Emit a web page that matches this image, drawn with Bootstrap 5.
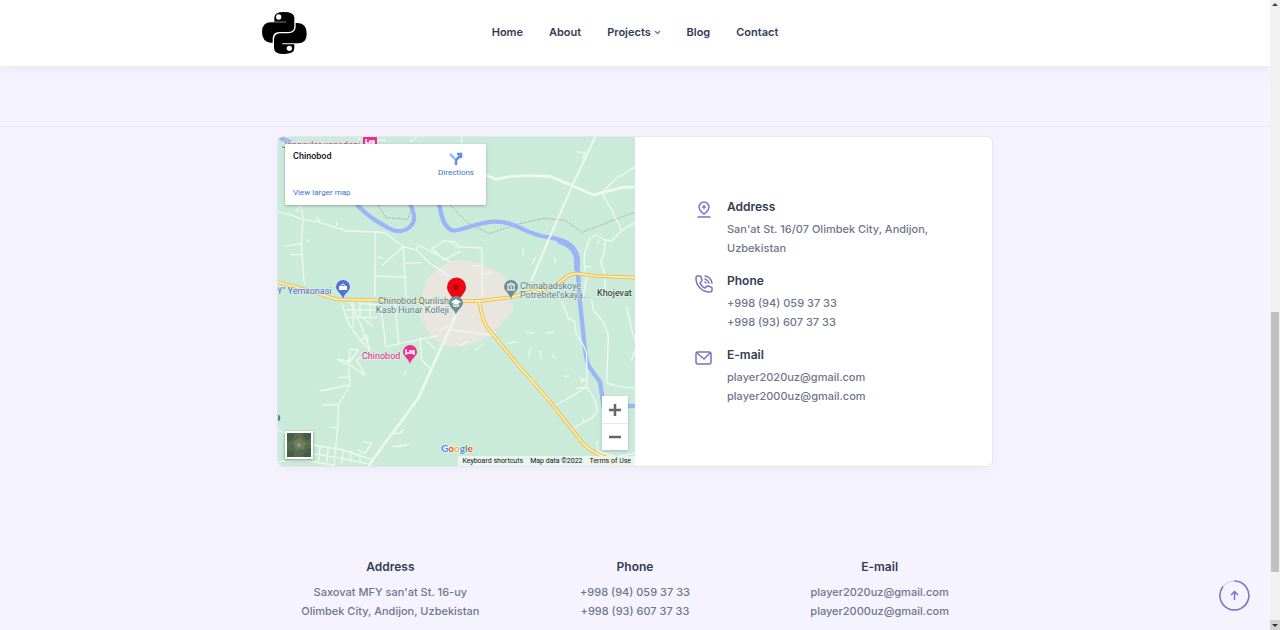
<!DOCTYPE html>
<html lang="en">
<head>
<meta charset="utf-8">
<meta name="viewport" content="width=device-width, initial-scale=1">
<title>Contact</title>
<link href="https://cdn.jsdelivr.net/npm/bootstrap@5.3.0/dist/css/bootstrap.min.css" rel="stylesheet">
<style>
  body { background: #f5f4fe; color: #6f758c; font: 500 11px/19px Inter, "Liberation Sans", sans-serif; }
  a { color: inherit; text-decoration: none; }
  h2, h3 { color: #333c54; font-size: 12px; line-height: 18px; font-weight: 600; }
  .site-header { background: #fff; height: 66px; box-shadow: 0 3px 16px rgba(60, 55, 110, .08); z-index: 2; }
  .page-width { max-width: 746px; }
  .main-menu { gap: 26px; padding-bottom: 2px; }
  .main-menu a { color: #333c54; font-weight: 600; }
  .intro-band { height: 61px; border-bottom: 1px solid #ecebf5; }
  .contact-area { padding: 9px 15px 0; }
  .contact-card { border: 1px solid #e6e5f0; border-radius: 6px; overflow: hidden; box-shadow: 0 3px 16px rgba(60, 55, 110, .05); }
  .map-pane { height: 329px; background: #cbebda; font-family: Roboto, sans-serif; }
  .map-info { top: 7px; left: 7px; width: 201px; height: 61px; padding: 5px 8px; border-radius: 1px; box-shadow: 0 1px 3px rgba(0, 0, 0, .3); font-size: 8px; line-height: 14px; color: #3b70dc; font-weight: 400; }
  .map-info strong { color: #111; font-size: 9px; font-weight: 500; }
  .directions { right: 12px; top: 8px; }
  .zoom-box { right: 7px; bottom: 16px; width: 26px; box-shadow: 0 1px 3px rgba(0, 0, 0, .2); }
  .zoom-box button { height: 27px; border: 0; background: #fff; color: #666; padding: 0; }
  .zoom-box button + button { box-shadow: inset 0 1px #e8e8e8; }
  .satellite { left: 7px; bottom: 7px; width: 28px; height: 28px; border: 2px solid #fff; padding: 0; box-shadow: 0 1px 3px rgba(0, 0, 0, .4); }
  .map-terms { right: 0; bottom: 0; gap: 7px; height: 10px; padding: 0 4px; background: rgba(245, 248, 246, .75); color: #111; font-size: 7px; line-height: 10px; font-weight: 400; }
  .map-label { font: 400 9px Roboto, sans-serif; paint-order: stroke; stroke: #e4f4eb; stroke-width: 1px; }
  .info-item { gap: 14px; }
  .info-item + .info-item { margin-top: 14px; }
  .info-item svg { flex: none; margin-top: 3px; stroke: #7f6fc6; fill: none; }
  .info-item h2 { margin-bottom: 4px; }
  .site-footer { margin-top: 91px; padding: 0 6px; }
  .site-footer h3 { margin-bottom: 7px; font-size: 12px; }
  .to-top { right: 30px; bottom: 19px; width: 31px; height: 31px; z-index: 3; }
  .scroll-strip { width: 10px; z-index: 4; background: #f1f1f1; }
  .scroll-thumb { height: 260px; width: 8px; background: #c1c1c1; margin-bottom: 48px; }
  .scroll-end { height: 10px; background: #d2d2d2; }
</style>
</head>
<body>
<div class="d-flex min-vh-100">
  <div class="flex-grow-1">
    <header class="site-header position-relative">
      <div class="page-width mx-auto h-100 d-flex align-items-center position-relative">
        <a href="#" aria-label="Python" class="d-block">
          <svg class="d-block" width="45" height="42" viewBox="0 0 135 126">
            <path d="M37 31V17Q37 0 66 0Q97 0 97 17V42Q97 60 78 60H51Q33 61 32 79V92H27Q0 90 0 60Q0 31 27 31H72V29H37Z"/>
            <path d="M101 33H107Q134 33 134 65Q134 94 108 94H61V97H97V109Q97 126 66 126Q36 126 36 108V82Q37 65 54 64H79Q101 62 101 44Z"/>
            <circle cx="50" cy="15" r="8" fill="#fff"/><circle cx="82" cy="109" r="8" fill="#fff"/>
          </svg>
        </a>
        <nav class="position-absolute start-0 end-0 pe-none" aria-label="Main">
          <ul class="main-menu list-unstyled d-flex justify-content-center m-0 pe-auto">
            <li><a href="#">Home</a></li>
            <li><a href="#">About</a></li>
            <li><a href="#">Projects <svg width="7" height="5" viewBox="0 0 7 5" fill="none" stroke="#7f6fc6" stroke-width="1.4"><path d="M1 1l2.500 2.500L6 1"/></svg></a></li>
            <li><a href="#">Blog</a></li>
            <li><a href="#">Contact</a></li>
          </ul>
        </nav>
      </div>
    </header>
    <div class="intro-band"></div>
    <main class="page-width contact-area mx-auto">
      <section class="contact-card row g-0 bg-white">
        <div class="map-pane col-6 position-relative overflow-hidden">
          <svg class="d-block w-100 h-100" viewBox="0 0 357 329" preserveAspectRatio="xMidYMid slice" role="img" aria-label="Map of Chinobod">
            <g transform="scale(.33333)" fill="none" stroke-linejoin="round" stroke-linecap="round">
              <path fill="#e9e5df" d="M426 539Q430 490 436 459Q445 420 476 399Q510 370 546 369Q585 368 616 384Q655 400 681 419L706 519Q680 560 646 579Q620 610 586 619Q560 632 516 629L496 624Q445 590 426 539Z"/>
              <g stroke="#7d8c89" stroke-width="2" stroke-linecap="butt" stroke-dasharray="5 4">
                <path d="M300 204L324 242L390 247L400 210M516 204L570 258L634 290L716 262L796 244L862 250L912 286L1071 225"/>
              </g>
              <g stroke="#9bb5f7" stroke-width="13">
                <path d="M238 204Q276 244 316 264Q350 286 370 282Q401 275 408 249Q410 229 396 200"/>
                <path d="M484 204C490 240 500 280 530 281C570 275 600 256 646 254C720 252 740 295 816 301C870 312 894 330 898 370L904 479L916 589Q922 660 931 684Q945 708 966 734L976 800M976 807H1071M0 0L34 14" />
                <path stroke-width="18" d="M846 312Q890 325 897 365V395"/>
              </g>
              <g stroke="#edf8f1" stroke-width="4">
                <g transform="translate(-24 -21)">
                  <path d="M22 245L60 254L95 268L150 277L230 303L320 306L345 308L400 350L440 360L480 400L540 440M93 225L99 268L94 340L103 462M45 349L94 340M65 374L98 374M315 308L315 500M400 350L408 500M400 350L375 372L338 405M408 400L455 398M440 360L445 345L540 395M485 355L500 348L520 332L555 335L570 350M485 355L522 390L570 365M320 438L410 442M267 20V44M420 35L440 22M290 22L310 32L345 30M80 245L88 225M138 265L150 272M200 285V278M110 330L117 335M325 380L335 385"/>
                </g>
                <g transform="translate(516 -21)">
                  <path stroke-width="8" d="M108 135L138 148L180 139L240 137L300 139L370 168L430 195L455 188L520 172L555 171"/>
                  <path stroke-width="6" d="M435 22L370 160L300 320L245 450"/>
                  <path d="M380 65L404 68L400 85M455 188L500 143L520 133L555 110M455 188L485 240L515 302M555 278L515 302L485 333L465 330L435 315L420 325L405 365L402 400L410 440L400 500M465 330L462 370L452 395L465 435V500M0 335L20 350L95 354L97 500M70 408H95M95 432L125 430M220 355V375M255 383L248 400M315 385V398M445 330V340M35 20V40M405 410H422M415 440H428"/>
                </g>
                <g transform="translate(-24 459)">
                  <path stroke-width="8" d="M560 70L520 160L485 235L445 325L390 400L340 465L298 525"/>
                  <path d="M215 40L235 100L270 150L300 180M240 35L270 100L300 180M250 35V110M270 35V80M300 35V85M230 60H315M235 82H320M265 40L325 45M330 35L348 170L420 155L500 138M375 40L386 165M450 145L455 210L480 235M275 150L290 135L298 185M205 208L240 215L265 180L240 177L236 222L285 255L260 210L285 195M236 222L240 285L205 345L203 410L192 525M203 208L225 222L245 205M150 303L238 285M160 345H205M180 412H198M208 262H238M280 85L310 110M22 420L45 430M130 465L220 480L310 510M120 490L200 502L290 520M22 515L100 510L190 525M150 470L145 520M175 473L170 515M220 478L215 520M245 483L240 515M280 455L305 460L285 490L265 480M270 490V520M370 430H390L400 418M370 470L415 465M390 475V465M405 245V255M470 155L495 175M510 120L535 105"/>
                </g>
                <g transform="translate(516 459)">
                  <path d="M0 120L70 128L125 135L135 125M335 35L355 85L375 95L378 130L400 165L410 190V290L380 310L318 345M410 290L435 330L442 360L430 380L370 415M425 30L430 60L460 95L475 135L470 280L500 287L555 295M530 50L545 120L555 150M545 210L555 180M440 455L445 485L500 500L555 490M390 265L412 275M380 295L410 290M400 385V395M235 200L242 175M270 185L275 205M308 195L315 205M230 130L250 128M175 160L200 155M75 180L100 162M30 165L55 155M290 130L310 125M395 265V280M345 260L355 258"/>
                </g>
              </g>
              <g>
                <path stroke="#eebf4f" stroke-width="11" d="M-6 434L86 459L176 487L276 489L516 494L616 491L696 481L766 463L826 449L861 424Q876 409 900 410L956 417L1075 422M604 491Q610 540 626 569L716 679L816 794L900 900Q930 945 985 962L1010 980"/>
                <path stroke="#fff0b5" stroke-width="5" d="M-6 434L86 459L176 487L276 489L516 494L616 491L696 481L766 463L826 449L861 424Q876 409 900 410L956 417L1075 422M604 491Q610 540 626 569L716 679L816 794L900 900Q930 945 985 962L1010 980"/>
              </g>
              <circle cx="-4" cy="843" r="11" fill="#5d7c83"/>
            </g>
            <g class="map-label">
              <text x="-1" y="157" fill="#4a66d8">Y" Yemxonasi</text>
              <text x="171" y="167" text-anchor="end" fill="#5e7886">Chinobod Qurilish</text>
              <text x="171" y="176" text-anchor="end" fill="#5e7886">Kasb Hunar Kolleji</text>
              <text x="242" y="152" fill="#5e7886">Chinabadskoye</text>
              <text x="242" y="161" fill="#5e7886">Potrebitel'skaya...</text>
              <text x="319" y="159" fill="#222">Khojevat</text>
              <text x="84" y="222" fill="#e32687">Chinobod</text>
              <text x="4" y="11" fill="#e32687">Jangovlar xonadoni</text>
            </g>
            <g fill="#5470dc" transform="translate(65 150)"><path d="M0 12C-1 7-7 4-7 0A7 7 0 0 1 7 0C7 4 1 7 0 12Z"/><path fill="#fff" d="M-4-1H4V3H-4Z"/><path d="M-2-1Q0-5 2-1" fill="none" stroke="#fff"/></g>
            <g fill="#eb2f8c" transform="translate(132 215)"><path d="M0 12C-1 7-7 4-7 0A7 7 0 0 1 7 0C7 4 1 7 0 12Z"/><path d="M-4-3V3M-4 1H4V3M-1-1H4V1" fill="none" stroke="#fff" stroke-width="1.500"/></g>
            <g fill="#eb2f8c" transform="translate(92 4)"><rect x="-7" y="-5" width="14" height="11" rx="2"/><path d="M-4-2V4M-4 2H4V4M-1 0H4V2" fill="none" stroke="#fff" stroke-width="1.500"/></g>
            <g fill="#6f8f96" transform="translate(233 150)"><path d="M0 12C-1 7-7 4-7 0A7 7 0 0 1 7 0C7 4 1 7 0 12Z"/><path d="M-4-2L0-4L4-2ZM-3-1V3M0-1V3M3-1V3M-4 3H4" fill="none" stroke="#fff"/></g>
            <path fill="#f00612" d="M178 167C177 161 169 157 169 150A9 9 0 0 1 188 150C188 157 180 161 178 167Z"/><circle cx="178" cy="150" r="3" fill="#b80711"/>
            <g fill="#6f8f96" transform="translate(178 166)"><path d="M0 12C-1 7-7 4-7 0A7 7 0 0 1 7 0C7 4 1 7 0 12Z"/><path fill="#fff" d="M-5-1L0-4L5-1L0 2ZM-3 1V3Q0 5 3 3V1L0 3Z"/></g>
            <text x="163" y="315" font-family="Lato, sans-serif" font-size="10" font-weight="700" stroke="#fff" stroke-width="1" paint-order="stroke"><tspan fill="#4285f4">G</tspan><tspan fill="#ea4335">o</tspan><tspan fill="#f4b400">o</tspan><tspan fill="#4285f4">g</tspan><tspan fill="#34a853">l</tspan><tspan fill="#ea4335">e</tspan></text>
          </svg>
          <div class="map-info position-absolute bg-white d-flex flex-column justify-content-between">
            <strong>Chinobod</strong>
            <a href="#">View larger map</a>
            <a href="#" class="directions position-absolute text-center">
              <svg class="d-block mx-auto" width="14" height="14" viewBox="0 0 14 14" fill="none" stroke="#5b91e8" stroke-width="2.500"><path d="M7 13V8L12 3M8 2H12V6"/><path stroke="#9bbdf1" d="M1 2L6 7"/></svg>
              Directions
            </a>
          </div>
          <button class="satellite position-absolute" type="button" aria-label="Show satellite imagery">
            <svg class="d-block w-100 h-100" viewBox="0 0 24 24"><path fill="#566b4d" d="M0 0H24V24H0Z"/><path fill="#6f7a5c" d="M6 8L13 5L19 10L16 17L8 16Z"/><path fill="#455c45" d="M0 0H8L4 9L0 8ZM15 0H24V6L19 7ZM0 17L7 19L8 24H0ZM18 17L24 14V24H16Z"/><path d="M12 12L2 8M12 12L22 20M12 12L14 1M12 12L7 24M12 12L23 10" stroke="#828b71" stroke-width=".4"/><circle cx="12" cy="12" r="2" fill="#979780"/></svg>
          </button>
          <div class="zoom-box position-absolute d-flex flex-column">
            <button type="button" aria-label="Zoom in"><svg width="12" height="12" viewBox="0 0 12 12" stroke="currentColor" stroke-width="2.500"><path d="M0 6H12M6 0V12"/></svg></button>
            <button type="button" aria-label="Zoom out"><svg width="12" height="12" viewBox="0 0 12 12" stroke="currentColor" stroke-width="2.500"><path d="M0 6H12"/></svg></button>
          </div>
          <div class="map-terms position-absolute d-flex">
            <a href="#">Keyboard shortcuts</a><span>Map data ©2022</span><a href="#">Terms of Use</a>
          </div>
        </div>
        <div class="col-6 d-flex flex-column justify-content-center ps-5 pe-5">
          <div class="ps-2 ms-1">
            <div class="info-item d-flex">
              <svg width="18" height="18" viewBox="0 0 18 18" stroke-width="1.500" stroke-linecap="round"><path d="M9 13C5 10 4 8 4 6A5 5 0 0 1 14 6C14 8 13 10 9 13ZM3 16H15"/><circle cx="9" cy="6" r="1" fill="#7f6fc6"/></svg>
              <div><h2>Address</h2><address class="m-0">San'at St. 16/07 Olimbek City, Andijon, Uzbekistan</address></div>
            </div>
            <div class="info-item d-flex">
              <svg width="18" height="18" viewBox="0 0 18 18" stroke-width="1.500" stroke-linecap="round" stroke-linejoin="round"><path d="M1 3Q1 1 3 1H5Q6 1 6 2L7 5Q7 6 6 7L5 8Q7 12 10 13L11 12Q12 11 13 11L16 12Q17 12 17 13V15Q17 17 15 17Q9 17 5 13Q1 9 1 3ZM10 1Q16 2 17 8M10 4Q13 5 14 8M10 7L11 8"/></svg>
              <div><h2>Phone</h2><a class="d-block" href="tel:+998940593733">+998 (94) 059 37 33</a><a class="d-block" href="tel:+998936073733">+998 (93) 607 37 33</a></div>
            </div>
            <div class="info-item d-flex">
              <svg width="18" height="18" viewBox="0 0 18 18" stroke-width="1.500" stroke-linejoin="round"><rect x="1" y="3" width="15" height="12" rx="2"/><path d="M2 4L9 10L15 4"/></svg>
              <div><h2>E-mail</h2><a class="d-block" href="mailto:player2020uz@gmail.com">player2020uz@gmail.com</a><a class="d-block" href="mailto:player2000uz@gmail.com">player2000uz@gmail.com</a></div>
            </div>
          </div>
        </div>
      </section>
    </main>
    <footer class="site-footer page-width mx-auto">
      <div class="row g-0 text-center">
        <div class="col-4"><h3>Address</h3><address class="m-0">Saxovat MFY san'at St. 16-uy<br>Olimbek City, Andijon, Uzbekistan</address></div>
        <div class="col-4"><h3>Phone</h3><a class="d-block" href="tel:+998940593733">+998 (94) 059 37 33</a><a class="d-block" href="tel:+998936073733">+998 (93) 607 37 33</a></div>
        <div class="col-4"><h3>E-mail</h3><a class="d-block" href="mailto:player2020uz@gmail.com">player2020uz@gmail.com</a><a class="d-block" href="mailto:player2000uz@gmail.com">player2000uz@gmail.com</a></div>
      </div>
    </footer>
  </div>
  <div class="scroll-strip sticky-top vh-100 d-flex flex-column justify-content-end align-items-center" aria-hidden="true">
    <svg class="mb-auto" width="10" height="10" viewBox="0 0 10 10"><path fill="#444" d="M2 6L5 3L8 6Z"/></svg>
    <div class="scroll-thumb"></div>
    <svg class="scroll-end" width="10" height="10" viewBox="0 0 10 10"><path fill="#333" d="M2 4H8L5 7Z"/></svg>
  </div>
</div>
<a class="to-top position-fixed" href="#" aria-label="Back to top">
  <svg class="d-block" width="31" height="31" viewBox="0 0 31 31" fill="none" stroke="#7f6fc6" stroke-width="1.500"><circle cx="15.500" cy="15.500" r="14.500" stroke="#dcd8ef"/><path d="M15.500 1A14.500 14.500 0 1 1 4 6.500"/><path d="M15.500 20V12M12 15L15.500 11.500L19 15"/></svg>
</a>
<script src="https://cdn.jsdelivr.net/npm/bootstrap@5.3.0/dist/js/bootstrap.bundle.min.js"></script>
</body>
</html>
